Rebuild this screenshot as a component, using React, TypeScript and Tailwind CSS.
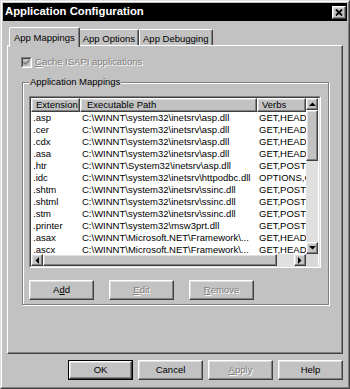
import React from "react";

const raised =
  "border border-t-white border-l-white border-r-[#404040] border-b-[#404040] shadow-[inset_-1px_-1px_0_#808080,inset_1px_1px_0_#dfdfdf]";
const disabledText = "text-[#808080] [text-shadow:1px_1px_0_#ffffff]";

type Row = { ext: string; path: string; verbs: string };
const rows: Row[] = [
  { ext: ".asp", path: "C:\\WINNT\\system32\\inetsrv\\asp.dll", verbs: "GET,HEAD,POST,TRACE" },
  { ext: ".cer", path: "C:\\WINNT\\system32\\inetsrv\\asp.dll", verbs: "GET,HEAD,POST,TRACE" },
  { ext: ".cdx", path: "C:\\WINNT\\system32\\inetsrv\\asp.dll", verbs: "GET,HEAD,POST,TRACE" },
  { ext: ".asa", path: "C:\\WINNT\\system32\\inetsrv\\asp.dll", verbs: "GET,HEAD,POST,TRACE" },
  { ext: ".htr", path: "C:\\WINNT\\System32\\inetsrv\\asp.dll", verbs: "GET,POST" },
  { ext: ".idc", path: "C:\\WINNT\\system32\\inetsrv\\httpodbc.dll", verbs: "OPTIONS,GET,HEAD,POST" },
  { ext: ".shtm", path: "C:\\WINNT\\system32\\inetsrv\\ssinc.dll", verbs: "GET,POST" },
  { ext: ".shtml", path: "C:\\WINNT\\system32\\inetsrv\\ssinc.dll", verbs: "GET,POST" },
  { ext: ".stm", path: "C:\\WINNT\\system32\\inetsrv\\ssinc.dll", verbs: "GET,POST" },
  { ext: ".printer", path: "C:\\WINNT\\system32\\msw3prt.dll", verbs: "GET,POST" },
  { ext: ".asax", path: "C:\\WINNT\\Microsoft.NET\\Framework\\...", verbs: "GET,HEAD,POST,DEBUG" },
  { ext: ".ascx", path: "C:\\WINNT\\Microsoft.NET\\Framework\\...", verbs: "GET,HEAD,POST,DEBUG" },
];

function Arrow({ dir }: { dir: "up" | "down" | "left" | "right" }) {
  const pts =
    dir === "up"
      ? "0,4 7,4 3.5,0.5"
      : dir === "down"
      ? "0,0 7,0 3.5,3.5"
      : dir === "left"
      ? "4,0 4,7 0.5,3.5"
      : "0,0 0,7 3.5,3.5";
  const w = dir === "up" || dir === "down" ? 7 : 4;
  const h = dir === "up" || dir === "down" ? 4 : 7;
  return (
    <svg width={w} height={h} viewBox={`0 0 ${w} ${h}`}>
      <polygon points={pts} fill="#000" />
    </svg>
  );
}

function ScrollBtn({ dir }: { dir: "up" | "down" | "left" | "right" }) {
  return (
    <div className={`w-[12px] h-[12px] shrink-0 flex items-center justify-center bg-[#c2c2c2] ${raised}`}>
      <Arrow dir={dir} />
    </div>
  );
}

function Btn({
  children,
  disabled,
  def,
}: {
  children: React.ReactNode;
  disabled?: boolean;
  def?: boolean;
}) {
  const inner = (
    <div
      className={`h-full w-full flex items-center justify-center ${raised} ${disabled ? disabledText : ""}`}
    >
      {children}
    </div>
  );
  if (def)
    return <div className="w-[65px] h-[20px] border border-black">{inner}</div>;
  return <div className="w-[65px] h-[20px]">{inner}</div>;
}

export default function App() {
  return (
    <div className="w-[350px] h-[389px] bg-[#c2c2c2] border border-t-[#dfdfdf] border-l-[#dfdfdf] border-r-[#404040] border-b-[#404040] font-[family-name:Liberation_Sans,Arial,sans-serif] text-[9.5px] text-black overflow-hidden">
      <div className="w-full h-full border border-t-white border-l-white border-r-[#808080] border-b-[#808080] flex flex-col">
        {/* Title bar */}
        <div className="mx-[1px] mt-[1px] h-[18px] bg-black flex items-center justify-between pl-[2px] pr-[1px]">
          <span className="text-white font-bold text-[11.3px] leading-none">Application Configuration</span>
          <div className={`w-[14px] h-[13px] bg-[#c2c2c2] flex items-center justify-center ${raised}`}>
            <svg width="8" height="7" viewBox="0 0 8 7">
              <path d="M1 0.5 L7 6.5 M7 0.5 L1 6.5" stroke="#000" strokeWidth="1.8" />
            </svg>
          </div>
        </div>

        {/* Tabs */}
        <div className="mt-[6px] ml-[7px] h-[20px] -mb-[2px] flex items-start relative z-10">
          <div className="h-[20px] px-[4px] pt-[3px] bg-[#c2c2c2] border-t border-l border-r border-t-white border-l-white border-r-[#404040] rounded-t-[2px] shadow-[inset_-1px_0_0_#808080]">
            App Mappings
          </div>
          <div className="mt-[2px] h-[16px] px-[3px] pt-[2px] border-t border-r border-t-white border-r-[#404040] rounded-tr-[2px] shadow-[inset_-1px_0_0_#808080]">
            App Options
          </div>
          <div className="mt-[2px] h-[16px] px-[3px] pt-[2px] border-t border-l border-r border-t-white border-l-white border-r-[#404040] rounded-t-[2px] shadow-[inset_-1px_0_0_#808080]">
            App Debugging
          </div>
        </div>

        {/* Tab panel */}
        <div className="ml-[5px] w-[336px] h-[309px] border border-t-white border-l-white border-r-[#404040] border-b-[#404040] shadow-[inset_-1px_-1px_0_#808080] flex flex-col">
          {/* checkbox */}
          <div className="mt-[11px] ml-[13px] h-[11px] flex items-center">
            <div className="w-[11px] h-[11px] border border-t-[#808080] border-l-[#808080] border-r-white border-b-white">
              <div className="w-full h-full border border-t-[#404040] border-l-[#404040] border-r-[#dfdfdf] border-b-[#dfdfdf] flex items-center justify-center">
                <svg width="7" height="7" viewBox="0 0 7 7">
                  <path d="M0.5 3 L2.5 5 L6.5 1" stroke="#808080" strokeWidth="1.6" fill="none" />
                </svg>
              </div>
            </div>
            <span className={`ml-[3px] ${disabledText}`}>
              <u>C</u>ache ISAPI applications
            </span>
          </div>

          {/* Group box */}
          <div className="relative mt-[14px] ml-[14px] w-[307px] h-[223px] border border-[#808080] shadow-[1px_1px_0_#ffffff,inset_1px_1px_0_#ffffff] flex flex-col">
            <span className="absolute left-[6px] -top-[7px] px-[1px] bg-[#c2c2c2] leading-[12px]">
              Application Mappings
            </span>

            {/* List view */}
            <div className="mt-[13px] ml-[6px] w-[292px] h-[172px] border border-t-[#808080] border-l-[#808080] border-r-white border-b-white">
              <div className="w-full h-full border border-t-[#404040] border-l-[#404040] border-r-[#dfdfdf] border-b-[#dfdfdf] bg-white flex flex-col">
                <div className="flex h-[156px]">
                  <div className="w-[275px] h-full flex flex-col overflow-hidden">
                    <div className="flex h-[14px] shrink-0">
                      <div className={`w-[49px] h-full pl-[4px] leading-[12px] bg-[#c2c2c2] overflow-hidden whitespace-nowrap ${raised}`}>Extension</div>
                      <div className={`w-[177px] h-full pl-[6px] leading-[12px] bg-[#c2c2c2] ${raised}`}>Executable Path</div>
                      <div className={`w-[49px] h-full pl-[4px] leading-[12px] bg-[#c2c2c2] ${raised}`}>Verbs</div>
                    </div>
                    <div className="flex-1 overflow-hidden">
                      {rows.map((r) => (
                        <div key={r.ext} className="flex h-[12px] leading-[12px] whitespace-nowrap">
                          <div className="w-[49px] pl-[2px] overflow-hidden">{r.ext}</div>
                          <div className="w-[177px] pl-[2px] overflow-hidden">{r.path}</div>
                          <div className="w-[49px] pl-[2px] overflow-hidden">{r.verbs}</div>
                        </div>
                      ))}
                    </div>
                  </div>
                  {/* vertical scrollbar */}
                  <div className="w-[12px] h-full flex flex-col bg-[#e0e0e0]">
                    <ScrollBtn dir="up" />
                    <div className={`h-[51px] bg-[#c2c2c2] ${raised}`} />
                    <div className="flex-1" />
                    <ScrollBtn dir="down" />
                  </div>
                </div>
                {/* horizontal scrollbar */}
                <div className="flex h-[12px]">
                  <div className="w-[275px] flex bg-[#e0e0e0]">
                    <ScrollBtn dir="left" />
                    <div className={`w-[234px] h-full bg-[#c2c2c2] ${raised}`} />
                    <div className="flex-1" />
                    <ScrollBtn dir="right" />
                  </div>
                  <div className="w-[12px] h-full bg-[#d8d8d8]" />
                </div>
              </div>
            </div>

            {/* group buttons */}
            <div className="mt-[12px] ml-[6px] flex gap-[15px]">
              <Btn>
                A<u>d</u>d
              </Btn>
              <Btn disabled>
                <u>E</u>dit
              </Btn>
              <Btn disabled>
                <u>R</u>emove
              </Btn>
            </div>
          </div>
        </div>

        {/* Dialog buttons */}
        <div className="mt-[6px] mr-[5px] flex justify-end gap-[5px]">
          <Btn def>OK</Btn>
          <Btn>Cancel</Btn>
          <Btn disabled>
            <u>A</u>pply
          </Btn>
          <Btn>Help</Btn>
        </div>
      </div>
    </div>
  );
}
